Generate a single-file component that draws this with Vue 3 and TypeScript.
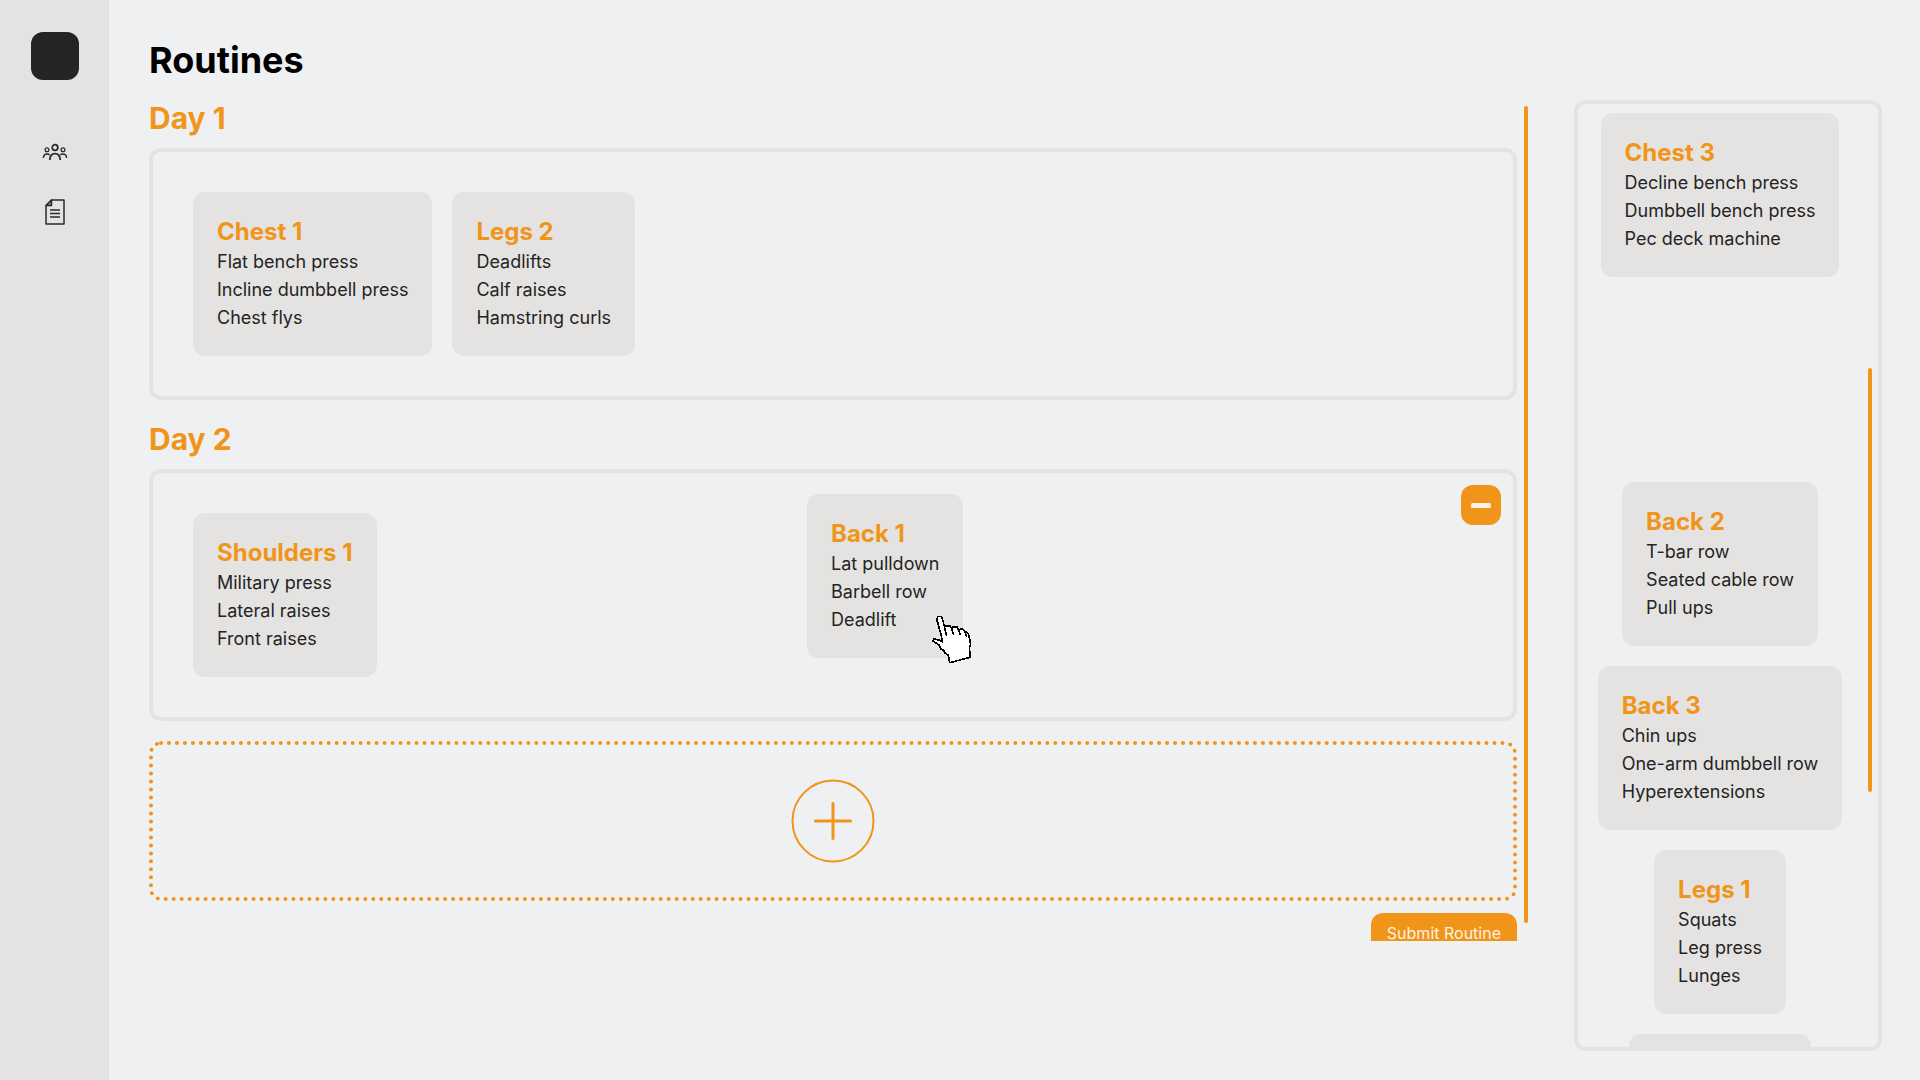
<script setup lang="ts">
import { ref } from 'vue'

interface Workout {
  name: string
  exercises: string[]
}

interface Day {
  id: number
  workouts: Workout[]
  dragging?: Workout
}

const days = ref<Day[]>([
  {
    id: 1,
    workouts: [
      { name: 'Chest 1', exercises: ['Flat bench press', 'Incline dumbbell press', 'Chest flys'] },
      { name: 'Legs 2', exercises: ['Deadlifts', 'Calf raises', 'Hamstring curls'] },
    ],
  },
  {
    id: 2,
    workouts: [
      { name: 'Shoulders 1', exercises: ['Military press', 'Lateral raises', 'Front raises'] },
    ],
    dragging: { name: 'Back 1', exercises: ['Lat pulldown', 'Barbell row', 'Deadlift'] },
  },
])

// null marks the slot left empty by the card being dragged
const library: (Workout | null)[] = [
  { name: 'Chest 3', exercises: ['Decline bench press', 'Dumbbell bench press', 'Pec deck machine'] },
  null,
  { name: 'Back 2', exercises: ['T-bar row', 'Seated cable row', 'Pull ups'] },
  { name: 'Back 3', exercises: ['Chin ups', 'One-arm dumbbell row', 'Hyperextensions'] },
  { name: 'Legs 1', exercises: ['Squats', 'Leg press', 'Lunges'] },
]

function addDay() {
  days.value.push({ id: days.value.length + 1, workouts: [] })
}

function removeDay() {
  days.value.pop()
}
</script>

<template>
  <div class="app">
    <nav class="sidebar">
      <div class="logo"></div>
      <a href="#" class="nav-link" aria-label="Clients">
        <svg width="26" height="18" viewBox="0 0 26 18" fill="none" stroke="#2b2b2b">
          <circle cx="13" cy="4.5" r="2.8" stroke-width="1.8" />
          <circle cx="5" cy="6.8" r="1.9" stroke-width="1.3" />
          <circle cx="21" cy="6.8" r="1.9" stroke-width="1.3" />
          <path d="M7.8 17C8 12.6 10 10.6 13 10.6S18 12.6 18.200 17" stroke-width="1.8" />
          <path d="M1.400 15C1.500 12.400 3 11 5 11c1.200 0 2 .3 2.600 1M24.600 15C24.500 12.400 23 11 21 11c-1.200 0-2 .3-2.600 1" stroke-width="1.500" />
        </svg>
      </a>
      <a href="#" class="nav-link" aria-label="Routines">
        <svg width="20" height="26" viewBox="0 0 20 26" fill="none" stroke="#2b2b2b" stroke-width="1.500" stroke-linejoin="round">
          <path d="M6.500 1H19v24H1V6.500z" />
          <path d="M6.500 1v5.500H1z" fill="#8a8988" />
          <path d="M5 11h10M5 14.500h10M5 18h10" />
        </svg>
      </a>
    </nav>

    <main class="main">
      <h1>Routines</h1>
      <div class="workspace">
        <div class="planner">
          <div class="planner-view">
            <section v-for="day in days" :key="day.id" class="day">
              <h2>Day {{ day.id }}</h2>
              <div class="drop-zone">
                <article v-for="w in day.workouts" :key="w.name" class="card">
                  <h3>{{ w.name }}</h3>
                  <ul>
                    <li v-for="e in w.exercises" :key="e">{{ e }}</li>
                  </ul>
                </article>
                <article v-if="day.dragging" class="card dragging">
                  <h3>{{ day.dragging.name }}</h3>
                  <ul>
                    <li v-for="e in day.dragging.exercises" :key="e">{{ e }}</li>
                  </ul>
                  <svg class="pointer" width="42" height="50" viewBox="-1 -1 126 150" shape-rendering="crispEdges">
                    <path
                      d="M16 11L20 4L28 3L33 9L39 33L46 31L56 32L61 38L66 34L76 34L82 44L88 41L96 42L101 50L108 51L112 58L118 86L114 98L117 126L55 142L51 120L42 114L38 106L30 102L22 88L12 82L4 76L8 71L22 74L34 80L28 54Z"
                      fill="#fff" stroke="#000" stroke-width="5" stroke-linejoin="bevel"
                    />
                    <path d="M39 33L46 62M61 38L67 60M82 44L87 60M101 50L106 66" fill="none" stroke="#000" stroke-width="5" />
                  </svg>
                </article>
                <button v-if="day.id > 1" class="remove" type="button" aria-label="Remove day" @click="removeDay">
                  <svg width="20" height="6" viewBox="0 0 20 6"><rect width="20" height="5" y="1" rx="1.500" fill="#fdf3e3" /></svg>
                </button>
              </div>
            </section>
            <button class="add-day" type="button" aria-label="Add day" @click="addDay">
              <svg width="84" height="84" viewBox="0 0 84 84" fill="none" stroke="#f0951a">
                <circle cx="42" cy="42" r="40.500" stroke-width="2" />
                <path d="M24.500 42h35M42 24.500v35" stroke-width="3" stroke-linecap="round" />
              </svg>
            </button>
            <button class="submit" type="button">Submit Routine</button>
          </div>
          <div class="thumb planner-thumb"></div>
        </div>

        <aside class="library">
          <div class="library-view">
            <template v-for="(w, i) in library" :key="i">
              <article v-if="w" class="card">
                <h3>{{ w.name }}</h3>
                <ul>
                  <li v-for="e in w.exercises" :key="e">{{ e }}</li>
                </ul>
              </article>
              <div v-else class="slot"></div>
            </template>
            <article class="card next"></article>
          </div>
          <div class="thumb library-thumb"></div>
        </aside>
      </div>
    </main>
  </div>
</template>

<style>
body {
  margin: 0;
  background: #eef0f2;
}
</style>

<style scoped>
* {
  box-sizing: border-box;
}

.app {
  display: flex;
  height: 100vh;
  overflow: hidden;
  background: #eef0f2;
  color: #242424;
  font-family: Inter, 'Liberation Sans', sans-serif;
}

.sidebar {
  display: flex;
  flex-direction: column;
  align-items: center;
  flex: none;
  width: 109px;
  padding: 32px 0 0 1px;
  background: #e4e3e1;
}

.logo {
  width: 48px;
  height: 48px;
  margin-bottom: 52px;
  border-radius: 12px;
  background: #242424;
}

.nav-link {
  display: flex;
  align-items: center;
  justify-content: center;
  width: 40px;
  height: 40px;
  margin-bottom: 20px;
}

.main {
  flex: 1;
  min-width: 0;
  padding: 38px 38px 0 40px;
}

h1,
h2,
h3,
ul {
  margin: 0;
  padding: 0;
}

h1 {
  margin-bottom: 18px;
  color: #000;
  font-size: 36px;
  font-weight: 700;
  line-height: 44px;
}

h2 {
  margin-bottom: 12px;
  color: #f0951a;
  font-size: 30px;
  font-weight: 700;
  line-height: 36px;
}

h3 {
  color: #f0951a;
  font-size: 24px;
  font-weight: 700;
  line-height: 32px;
}

ul {
  list-style: none;
  font-size: 18px;
  font-weight: 400;
  line-height: 28px;
  white-space: nowrap;
}

.workspace {
  display: flex;
  align-items: flex-start;
  gap: 46px;
}

.planner {
  position: relative;
  flex: 1;
  min-width: 0;
}

.planner-view {
  display: flex;
  flex-direction: column;
  height: calc(100vh - 239px);
  padding-right: 11px;
  overflow: hidden;
}

.day {
  flex: none;
}

.day + .day {
  margin-top: 21px;
}

.drop-zone {
  position: relative;
  display: flex;
  gap: 20px;
  min-height: 252px;
  padding: 40px;
  border: 4px solid #e4e3e1;
  border-radius: 12px;
}

.card {
  flex: none;
  min-height: 164px;
  padding: 24px;
  border-radius: 12px;
  background: #e4e3e1;
}

.dragging {
  position: absolute;
  top: 21px;
  left: 654px;
}

.pointer {
  position: absolute;
  top: 121px;
  left: 124px;
}

button {
  border: 0;
  font-family: inherit;
  cursor: pointer;
}

.remove {
  position: absolute;
  top: 12px;
  right: 12px;
  display: flex;
  align-items: center;
  justify-content: center;
  width: 40px;
  height: 40px;
  padding: 0;
  border-radius: 12px;
  background: #f0951a;
}

.add-day {
  display: flex;
  flex: none;
  align-items: center;
  justify-content: center;
  height: 160px;
  margin: 20px 0 12px;
  border: 4px dotted #f0951a;
  border-radius: 12px;
  background: none;
}

.submit {
  flex: none;
  align-self: flex-end;
  height: 40px;
  padding: 0 16px;
  border-radius: 12px;
  background: #f0951a;
  color: #fdf3e3;
  font-size: 16px;
  font-weight: 400;
}

.library {
  position: relative;
  flex: none;
  width: 308px;
  height: calc(100vh - 129px);
  border: 4px solid #e4e3e1;
  border-radius: 12px;
}

.library-view {
  display: flex;
  flex-direction: column;
  align-items: center;
  gap: 20px;
  height: 100%;
  padding: 9px 16px 0 0;
  overflow: hidden;
}

.slot {
  flex: none;
  height: 165px;
}

.next {
  width: 182px;
}

.thumb {
  position: absolute;
  width: 4px;
  border-radius: 2px;
  background: #f0951a;
}

.planner-thumb {
  top: 6px;
  right: 0;
  bottom: 18px;
}

.library-thumb {
  top: 264px;
  right: 6px;
  height: 424px;
}
</style>
